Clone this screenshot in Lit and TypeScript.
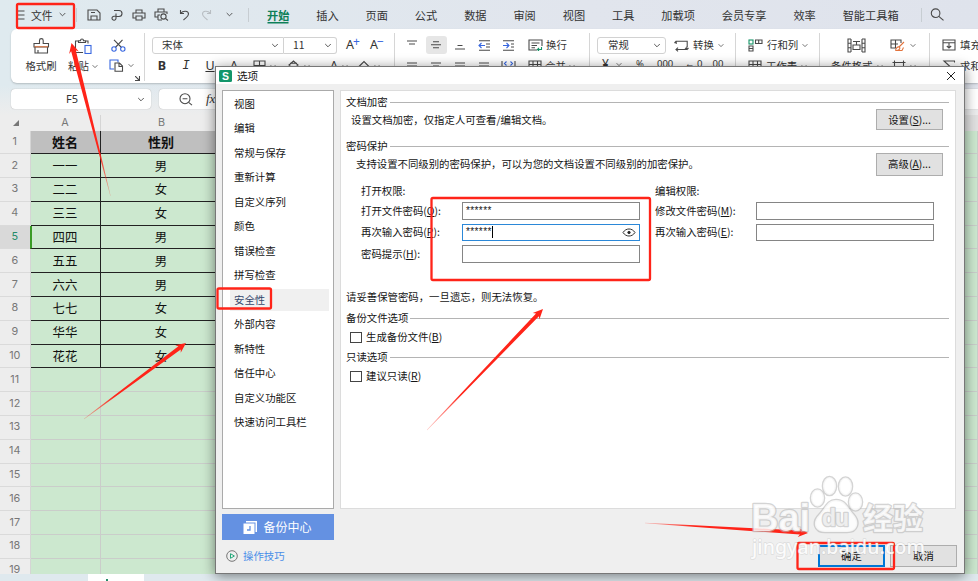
import { LitElement, html, svg, css } from "lit";
import { customElement } from "lit/decorators.js";
import { classMap } from "lit/directives/class-map.js";

const icon = (w: number, h: number, body: unknown, cls = "ic") =>
  html`<svg class=${cls} width=${w} height=${h} viewBox="0 0 ${w} ${h}">${body}</svg>`;
const chevron = (w = 7) =>
  html`<svg class="ic chev" width=${w} height="5" viewBox="0 0 7 5"><path d="M.7 1L3.5 3.8L6.3 1" /></svg>`;

const save = icon(14, 12, svg`<path d="M1 1H10L13 4V11H1ZM4 11V7H10V11M4 3.5H8" />`);
const share = icon(12, 12, svg`<path d="M3 1.5H8A3 3 0 0 1 8 7.5H5M5 4.5V9A2 2 0 1 1 3 7.2H5" />`);
const printer = icon(14, 12, svg`<path d="M4 4V1H10V4M4 9H1V4H13V9H10M4 7H10V11H4Z" />`);
const preview = icon(15, 13, svg`<path d="M4 4V1H10V4M4 9H1V4H13V6M4 12V7H6M4 12H8" /><circle cx="9.5" cy="8.5" r="2.6" /><path d="M11.5 10.5L14 12.5" />`);
const undo = icon(11, 12, svg`<path d="M1.5 1V4.5H5M1.8 4.2C4 1.5 9.5 1.5 9.5 5C9.5 7.5 7 8.5 4.5 11" />`);
const redo = icon(11, 12, svg`<path d="M9.5 1V4.5H6M9.2 4.2C7 1.5 1.5 1.5 1.5 5C1.5 7.5 4 8.5 6.5 11" />`, "ic pale");
const search = icon(15, 13, svg`<circle cx="5.6" cy="5.2" r="4.3" /><path d="M8.8 8.3L13.5 12.3" />`);
const brush = icon(17, 16, svg`<path d="M6.5 5.5V2.5A1.8 1.8 0 0 1 10.2 2.5V5.5H15.5V9H1V5.5ZM2 9V15H14.5V9M5 15V12" /><path class="orange" d="M1.5 8.8H15" />`);
const paste = icon(18, 16, svg`<path d="M5 3H1.5V14.5H9M11 3H14V5.5M4.5 4.5H11.5V2.8H9.5C9.5 .4 6.5 .4 6.5 2.8H4.5Z" /><rect class="blue" x="11" y="7.5" width="6" height="8" />`);
const cut = icon(15, 13, svg`<path d="M3 .8L10.5 8.5M11.5 .8L4.3 8.5" /><circle class="blue" cx="3" cy="10" r="2.2" /><circle class="blue" cx="11.8" cy="10" r="2.2" />`);
const copy = icon(15, 13, svg`<path class="blue" d="M5 10H1V1H9V3.5" /><path d="M6 4H10.5L13.5 7V12.3H6ZM10 4V7.5H13.5" />`);
const bars = (a: number, b: number, c: number, second = true) =>
  icon(12, 10, svg`<path d="M${a} ${b}H${12 - a}${second ? `M${c} ${b + 3}H${12 - c}` : ""}" />`);
const alignMid = icon(12, 10, svg`<path d="M3 1.7H9M1 4.7H11M3 7.7H9" />`);
const alignBot = icon(12, 10, svg`<path d="M3.5 5.5H8.5M1 9H11" />`);
const outdent = icon(13, 11, svg`<path d="M1 .7H12M8 4H12M8 7H12M1 10.2H12" /><path class="blue" d="M7 5.5H1M3.5 3L1 5.5L3.5 8" />`);
const indent = icon(13, 11, svg`<path d="M1 .7H12M9 4H12M9 7H12M1 10.2H12" /><path class="blue" d="M1 5.5H7M4.5 3L7 5.5L4.5 8" />`);
const wrap = icon(15, 12, svg`<path d="M9 11H1V1H14V7M3.5 4H11.5M3.5 6.5H9M3.5 8.7H7" /><path class="green" d="M13.5 8V10.5H9.5M11 9L9.5 10.5L11 12" />`);
const tableIc = icon(14, 12, svg`<path d="M1 1H13V11H1ZM1 4.5H13M5 1V11M9.5 1V11" />`);
const colsBlue = icon(15, 12, svg`<path d="M1 1V11M14 1V11" /><path class="blue" d="M5.5 1.5L3.5 3.5L5.5 5.5M9.5 1.5L11.5 3.5L9.5 5.5" />`);
const bucket = icon(13, 12, svg`<path d="M2 5L6.5 1L11 5L6.5 9.5ZM3 3.3H10M11.5 7V9" />`);
const eraser = icon(13, 12, svg`<path d="M1.5 7L7 1.5L11.5 6L7 10.5H4.5Z" />`);
const grid4 = icon(13, 12, svg`<path d="M1 1H12V11H1ZM1 5.5H12M6.5 1V11" />`);
const convert = icon(15, 13, svg`<path d="M2.2 5V2.2H13.2V8M12.8 7.5V10.5H2M.5 4L2.2 2.2M11 8.8L13 10.6L14.5 9M4 8.7L2 10.5L4 12.3" />`);
const rowsCols = icon(15, 13, svg`<rect class="green" x="1" y="1" width="4" height="4" /><path d="M1 7H5V12H1ZM1 9.5H5M7.5 1H14V4.5H7.5ZM10.7 1V4.5" />`);
const condFmt = icon(19, 15, svg`<path d="M4 1H1V14H4M1 5.3H4M1 9.7H4M15 1H18V14H15M15 5.3H18M15 9.7H18M4 1V14M15 1V14M6 3.5H13M9.5 3.5V7M6 7H13V11.5H6Z" />`);
const fmtBrush = icon(16, 13, svg`<path d="M6 9H1V1H11V4M1 5H8M5.5 1V9" /><path class="orange" d="M14 3L9 8M5.5 11.5C6 9 7.5 7.5 9.2 8C11 9 9 12 5.5 11.5M8 11.5H12L13.5 8.5" />`);
const cellIc = icon(14, 12, svg`<path d="M2.5 2.5H11.5V10H2.5ZM.5 2.5H13.5M2.5 .5V4M11.5 .5V4" />`);
const fill = icon(14, 12, svg`<path d="M1 1H13V11H1ZM1 3.7H13M7 4V9M4.8 7L7 9L9.2 7" />`);
const sigma = icon(14, 12, svg`<path d="M12.5 2.5V1H2L7.5 6L2 11H12.5V9.5" />`);
const zoomOut = icon(14, 13, svg`<circle cx="6" cy="5.7" r="5" /><path d="M3.6 5.7H8.4M9.6 9.3L13 12.2" />`);

const TABS = ["开始", "插入", "页面", "公式", "数据", "审阅", "视图", "工具", "加载项", "会员专享", "效率", "智能工具箱"];
const PEOPLE = [
  ["姓名", "性别"], ["一一", "男"], ["二二", "女"], ["三三", "女"], ["四四", "男"],
  ["五五", "男"], ["六六", "男"], ["七七", "女"], ["华华", "女"], ["花花", "女"],
];
const SECTIONS = ["视图", "编辑", "常规与保存", "重新计算", "自定义序列", "颜色", "错误检查", "拼写检查", "安全性",
  "外部内容", "新特性", "信任中心", "自定义功能区", "快速访问工具栏"];
const key = (label: string, k: string, tail = "") => html`<span>${label}(<u>${k}</u>)${tail}</span>`;

@customElement("sheet-view")
export class SheetView extends LitElement {
  static styles = css`
    :host { display: block; flex: 1; min-height: 0; overflow: hidden; background: #ededed; color: #777;
      font: 10.8px/12px Inter, "Noto Sans CJK SC", sans-serif; }
    .row { display: grid; grid-template-columns: 30.5px 70px 122px 1fr; height: 23.8px; }
    .row > * { display: flex; align-items: center; justify-content: center; box-sizing: border-box; }
    .head { height: 15.5px; }
    .head > :nth-child(2) { border-right: 1px solid #d5d5d5; }
    .head > :last-child { background: #e1e1e1; }
    .corner svg { margin-left: 2px; fill: #777; }
    .num { border-bottom: 1px solid #dadada; border-right: 1px solid #d5d5d5; }
    .num.on { background: #d9d9d9; color: #248b68; }
    .cell { background: #cce8cf; border-bottom: 1px solid #cacdca; border-right: 1px solid #cacdca; }
    .filled { color: #111; font: 12.4px/16px "Noto Sans CJK SC", sans-serif; border-color: #222; }
    .title .filled { background: #bfbfbf; font-size: 13px; font-weight: 700; }
    .active { border-left: 2px solid #399b25; padding-right: 1px; margin-left: -1px; }
  `;
  render() {
    return html`
      <div class="row head">
        <span class="corner"><svg width="6" height="6"><path d="M6 0V6H0Z" /></svg></span><span>A</span><span>B</span><span></span>
      </div>
      ${Array.from({ length: 19 }, (_, i) => {
        const p = PEOPLE[i];
        return html`<div class=${classMap({ row: true, title: i === 0 })}>
          <span class=${classMap({ num: true, on: i === 4 })}>${i + 1}</span>
          <span class=${classMap({ cell: true, filled: !!p, active: i === 4 })}>${p?.[0]}</span>
          <span class=${classMap({ cell: true, filled: !!p })}>${p?.[1]}</span>
          <span class="cell"></span>
        </div>`;
      })}`;
  }
}

@customElement("options-dialog")
export class OptionsDialog extends LitElement {
  static styles = css`
    :host { display: flex; flex-direction: column; box-sizing: border-box; width: 750px; height: 508px;
      background: #efefef; border: 1px solid #777; box-shadow: 0 2px 12px rgba(0, 0, 0, .48);
      color: #141414; font: 10.4px/14px "Noto Sans CJK SC", sans-serif; }
    * { box-sizing: border-box; }
    u { text-decoration-thickness: 1px; text-underline-offset: 1px; }
    .bar { height: 17px; background: #fff; display: flex; align-items: center; padding: 0 8px 0 3px; flex: none; }
    .logo { width: 13px; height: 12px; background: #13966a; color: #fff; border-radius: 1.5px; text-align: center;
      font: 700 10.5px/12px "Liberation Sans", sans-serif; }
    .name { flex: 1; padding-left: 5px; font-size: 10.6px; }
    .x { stroke: #222; fill: none; }
    .main { display: flex; gap: 6px; padding: 6px 8px 0 6px; height: 425px; flex: none; }
    .list { width: 112px; background: #fff; border: 1px solid #aaa; display: flex; flex-direction: column; padding-top: .5px; }
    .item { height: 24.5px; padding-left: 11px; display: flex; align-items: center; flex: none; }
    .item.on { background: linear-gradient(#f0f0f0, #f0f0f0) 7px center / 99px 22px no-repeat; color: #34466b; }
    .page { flex: 1; background: #fff; border: 1px solid #dcdcdc; padding: 4px 6px 0 5px; display: flex;
      flex-direction: column; }
    .legend { display: flex; align-items: center; gap: 2px; height: 14px; flex: none; }
    .legend::after { content: ""; flex: 1; height: 1px; background: #b4b4b4; }
    .line { display: flex; align-items: center; justify-content: space-between; padding: 0 6px 0 5px; height: 21px; flex: none; }
    .deep { padding-left: 10px; height: 22px; }
    .btn { background: #e1e1e1; border: 1px solid #adadad; width: 67px; height: 21px; display: flex;
      align-items: center; justify-content: center; }
    .tall { height: 23px; }
    .mt6 { margin-top: 6px; }
    .mt7 { margin-top: 7px; }
    .mt9 { margin-top: 9px; }
    .form { display: grid; grid-template-columns: 101px 178px 15px 101px 178px; grid-template-rows: 19px 21px 21.5px 21.5px;
      padding-left: 15px; margin-top: 6.5px; align-items: center; flex: none; }
    .pw { height: 17.5px; border: 1px solid #858585; display: flex; align-items: center; padding: 0 3px; }
    .stars { display: block; font: 10px/10px "Liberation Sans", sans-serif; letter-spacing: .4px; }
    .focus { border-color: #2b88d8; }
    .focus .stars { border-right: 1px solid #000; line-height: 12px; }
    .eye { margin-left: auto; fill: none; stroke: #333; }
    .c1 { grid-column: 1; } .c4 { grid-column: 4; }
    .notice { margin-top: 25.5px; height: 14px; flex: none; }
    .check { display: flex; align-items: center; gap: 4px; padding-left: 4px; height: 14px; margin-top: 5px; flex: none; }
    .check i { width: 12px; height: 11px; border: 1px solid #444; }
    .foot { display: flex; flex: 1; padding: 5px 7px 0 6px; justify-content: space-between; }
    .backup { width: 112px; height: 26px; background: #6491e2; color: #fff; font-size: 12px; display: flex;
      align-items: center; justify-content: center; gap: 6px; padding-right: 1px; }
    .tips { display: flex; align-items: center; gap: 5px; color: #4a8ee8; margin: 9px 0 0 4px; }
    .actions { display: flex; gap: 5px; padding-top: 31px; }
    .ok { border: 2px solid #0078d7; }
    .actions .btn { height: 22px; }
  `;
  render() {
    return html`
      <div class="bar"><span class="logo">S</span><span class="name">选项</span>
        <svg class="x" width="10" height="10"><path d="M1 1L9 9M9 1L1 9" /></svg></div>
      <div class="main">
        <div class="list">
          ${SECTIONS.map((s) => html`<div class=${classMap({ item: true, on: s === "安全性" })}>${s}</div>`)}
        </div>
        <div class="page">
          <div class="legend">文档加密</div>
          <div class="line"><span>设置文档加密，仅指定人可查看/编辑文档。</span><span class="btn">${key("设置", "S", "...")}</span></div>
          <div class="legend mt9">密码保护</div>
          <div class="line deep"><span>支持设置不同级别的密码保护，可以为您的文档设置不同级别的加密保护。</span><span class="btn tall">${key("高级", "A", "...")}</span></div>
          <div class="form">
            <span class="c1">打开权限:</span><span class="c4">编辑权限:</span>
            <span class="c1">${key("打开文件密码", "O", ":")}</span><span class="pw"><span class="stars">******</span></span>
            <span class="c4">${key("修改文件密码", "M", ":")}</span><span class="pw"></span>
            <span class="c1">${key("再次输入密码", "P", ":")}</span>
            <span class="pw focus"><span class="stars">******</span>
              <svg class="eye" width="14" height="9"><path d="M1 4.5C4 -.2 10 -.2 13 4.5C10 9.2 4 9.2 1 4.5Z" /><circle cx="7" cy="4.5" r="1.2" fill="#222" /></svg></span>
            <span class="c4">${key("再次输入密码", "E", ":")}</span><span class="pw"></span>
            <span class="c1">${key("密码提示", "H", ":")}</span><span class="pw"></span>
          </div>
          <div class="notice">请妥善保管密码，一旦遗忘，则无法恢复。</div>
          <div class="legend mt7">备份文件选项</div>
          <div class="check"><i></i>${key("生成备份文件", "B")}</div>
          <div class="legend mt6">只读选项</div>
          <div class="check"><i></i>${key("建议只读", "R")}</div>
        </div>
      </div>
      <div class="foot">
        <div>
          <div class="backup"><svg width="14" height="13"><path d="M3 0H14V11H12.5V1.5H3Z" fill="#fff" /><rect y="2.5" x=".5" width="11" height="10.5" fill="#fff" /><path d="M7 5V9H4" stroke="#6491e2" stroke-width="1.3" fill="none" /></svg>备份中心</div>
          <div class="tips"><svg width="12" height="12" fill="none"><circle cx="6" cy="6" r="5.3" stroke="#777" /><path d="M4.5 3.7L8.4 6L4.5 8.3Z" stroke="#25a87a" /></svg>操作技巧</div>
        </div>
        <div class="actions"><span class="btn ok">确定</span><span class="btn">取消</span></div>
      </div>`;
  }
}

interface Arrow { tail: [number, number]; tip: [number, number]; w: number; }
const ARROWS: Arrow[] = [
  { tail: [110.5, 196], tip: [71.5, 43], w: 2.4 },
  { tail: [84, 419], tip: [186, 343], w: 2 },
  { tail: [427, 430], tip: [543, 309], w: 2 },
  { tail: [645, 523], tip: [808, 533], w: 2 },
];
const BOXES = [[17, 4, 57, 24], [217.5, 288.5, 53.5, 20], [431.5, 198, 218.5, 82], [797.5, 543, 96.5, 26]];

@customElement("app-root")
export class AppRoot extends LitElement {
  static styles = css`
    :host { display: flex; flex-direction: column; position: relative; width: 978px; height: 581px; overflow: hidden;
      background: linear-gradient(#0000 85px, #ededed 115px), linear-gradient(90deg, #dfeaef, #e1e5ed 60%, #dfe3ec);
      color: #333; font: 10.4px/14px "Noto Sans CJK SC", sans-serif; }
    * { box-sizing: border-box; }
    .ic { fill: none; stroke: #4a4a4a; stroke-width: 1.1; flex: none; display: block; }
    .chev { stroke-width: .9; }
    .pale { stroke: #b8bdc2; }
    .blue { stroke: #3867e0; } .green { stroke: #149467; } .orange { stroke: #e2733c; }
    .menu { display: flex; align-items: center; height: 29px; padding-left: 18px; flex: none; }
    .file { display: flex; align-items: center; gap: 6px; width: 58px; font-size: 10.8px; }
    .sep { width: 1px; height: 14px; background: #c7cdd2; flex: none; }
    .quick { display: grid; grid-template-columns: repeat(7, 22.5px); justify-items: center; align-items: center;
      padding-left: 6px; width: 171px; }
    .tabs { display: flex; gap: 26.9px; margin-left: 18px; font-size: 11.2px; width: 654px; white-space: nowrap; }
    .tabs .on { color: #0d7f58; font-weight: 700; box-shadow: 0 2px 0 -.5px #0d7f58; }
    .find { padding-left: 8px; }
    .ribbon { display: flex; margin-left: 11px; height: 54px; background: #fff; border-radius: 6px 0 0 6px; flex: none;
      box-shadow: 0 1px 2px rgba(0, 0, 0, .2); padding-top: 4px; overflow: hidden; }
    .group { display: flex; flex-direction: column; height: 48px; border-right: 1px solid #d6d6d6; flex: none; }
    .line { display: flex; align-items: center; height: 24px; flex: none; white-space: nowrap; }
    .line + .line { height: 18px; }
    .clip { width: 134px; flex-direction: row; padding-left: 9px; position: relative; }
    .big { display: flex; flex-direction: column; align-items: center; width: 42px; padding-top: 5px; gap: 5px; }
    .big > span { display: flex; align-items: center; gap: 3px; }
    .small { display: flex; flex-direction: column; padding: 6px 0 0 7px; gap: 7px; }
    .small > span { display: flex; align-items: center; gap: 4px; }
    .small > span + span { margin-left: -2px; }
    .launch { position: absolute; right: 4px; bottom: 0; }
    .font { width: 250px; padding-left: 7px; }
    .box { display: flex; align-items: center; justify-content: space-between; height: 17px; border: 1px solid #d2d2d2;
      padding: 0 4px 0 9px; border-radius: 3px; }
    .family { width: 132px; border-radius: 3px 0 0 3px; }
    .size { width: 53px; border-left: 0; border-radius: 0 3px 3px 0; }
    .grow { width: 24px; display: flex; justify-content: center; font: 12.5px/14px "Noto Sans", sans-serif; margin-left: 4px; }
    .grow + .grow { margin-left: 0; }
    .grow sup { color: #3867e0; font: 12px/8px "Noto Sans", sans-serif; margin-left: -1px; }
    .fmt { display: grid; grid-template-columns: 24px 24px 24px 31px 34px 34px 36px 34px; align-items: center; margin-left: -2px; }
    .fmt > * { display: flex; align-items: center; gap: 4px; }
    .fmt .ch { justify-content: center; font: 12.5px/14px "Noto Sans", sans-serif; }
    .fmt b { font-weight: 700; }
    .fmt i { font-family: "Liberation Mono", monospace; }
    .fmt .strike { padding-right: 7px; }
    .align { width: 195px; padding-left: 5px; }
    .slot { width: 24px; display: flex; justify-content: center; flex: none; }
    .hl { width: 21px; height: 18px; margin: 0 1.5px; align-items: center; background: #e6e6e6; border-radius: 3px; }
    .lab { display: flex; align-items: center; gap: 4px; }
    .align .lab { margin-left: 8px; gap: 3px; }
    .num { width: 146px; padding-left: 7px; }
    .kind { width: 69px; padding-left: 10px; }
    .num .lab { margin-left: 8px; }
    .figs { display: grid; grid-template-columns: 34px 21px 28px 25px 25px; font: 9.5px/12px "Noto Sans", sans-serif;
      padding: 0 0 4px 5px; }
    .figs span { display: flex; gap: 7px; align-items: center; }
    .figs .yen { font-size: 12px; }
    .cells { width: 84px; padding-left: 12px; }
    .cells .line { gap: 4px; }
    .style { width: 110px; padding-left: 11px; }
    .style .line { justify-content: space-between; padding-right: 13px; }
    .style .line:first-child { padding-left: 16px; }
    .last { border: 0; padding-left: 12px; }
    .last .line { gap: 4px; }
    .formula { display: flex; height: 32px; padding: 6px 0 0 11px; gap: 8px; flex: none; }
    .ref { width: 140px; height: 20px; background: #fff; border-radius: 4px; display: flex; align-items: center;
      padding: 0 6px 0 55px; justify-content: space-between; font: 11px/14px "Noto Sans", sans-serif; box-shadow: 0 0 1px #999; }
    .entry { flex: 1; height: 20px; background: #fff; border-radius: 4px 0 0 4px; display: flex; align-items: center; gap: 13px;
      padding-left: 20px; box-shadow: 0 0 1px #999; font: italic 13px/14px "Liberation Serif", serif; }
    .sheets { height: 7px; display: flex; background: #dfe9ee; flex: none; }
    .sheets .tab { width: 56px; margin-left: 88px; background: #fff; display: flex; justify-content: center; align-items: flex-end; }
    .sheets .tab::after { content: ""; width: 2px; height: 2px; background: #248b68; margin-right: 19px; }
    .dialog { position: absolute; left: 215px; top: 66px; }
    .marks { position: absolute; inset: 0; }
    .wm { fill: #fff; fill-opacity: .8; stroke: #b8b8b8; stroke-width: 2.6; paint-order: stroke; stroke-opacity: .6;
      stroke-linejoin: round; font-family: "Liberation Sans", "Noto Sans CJK SC", sans-serif; font-weight: 700; }
    .thin { font-family: "Noto Sans", sans-serif; font-weight: 500; stroke-width: 1.4; stroke-opacity: .35; fill-opacity: .9; }
    .cjk { font-family: "Noto Sans CJK SC", sans-serif; }
    .inner { fill: #eee; fill-opacity: 1; }
    .frame { fill: none; stroke: #ff2419; stroke-width: 2.3; }
  `;

  private arrow(a: Arrow, i: number) {
    const dx = a.tip[0] - a.tail[0], dy = a.tip[1] - a.tail[1];
    const len = Math.hypot(dx, dy), ux = dx / len, uy = dy / len;
    const at = (back: number, side: number) =>
      `${(a.tip[0] - ux * back - uy * side).toFixed(2)},${(a.tip[1] - uy * back + ux * side).toFixed(2)}`;
    const pts = [at(len, 0.2), at(8, a.w), at(10, a.w + 2.6), at(0, 0), at(10, -a.w - 2.6), at(8, -a.w), at(len, -0.2)];
    return svg`<linearGradient id="fade${i}" gradientUnits="userSpaceOnUse" x1=${a.tail[0]} y1=${a.tail[1]} x2=${a.tip[0]} y2=${a.tip[1]}>
        <stop offset="0" stop-color="#ff2419" stop-opacity=".25" /><stop offset=".3" stop-color="#ff2419" />
      </linearGradient><polygon points=${pts.join(" ")} fill="url(#fade${i})" />`;
  }

  render() {
    return html`
      <div class="menu">
        <div class="file">${icon(7, 10, svg`<path d="M0 1H6.5M0 5H6.5M0 9H6.5" />`)}<span>文件</span>${chevron()}</div>
        <i class="sep"></i>
        <div class="quick">${save}${share}${printer}${preview}${undo}${redo}${chevron(9)}</div>
        <i class="sep"></i>
        <div class="tabs">${TABS.map((t, i) => html`<span class=${classMap({ on: i === 0 })}>${t}</span>`)}</div>
        <i class="sep"></i><div class="find">${search}</div>
      </div>
      <div class="ribbon">
        <div class="group clip">
          <div class="big">${brush}<span>格式刷</span></div>
          <div class="big">${paste}<span>粘贴${chevron(6)}</span></div>
          <div class="small"><span>${cut}</span><span>${copy}${chevron(6)}</span></div>
          <svg class="ic launch" width="5" height="5"><path d="M0 0L4 4M4.5 0V4.5H0" /></svg>
        </div>
        <div class="group font">
          <div class="line"><span class="box family">宋体${chevron(8)}</span><span class="box size">11${chevron(8)}</span>
            <span class="grow">A<sup>+</sup></span><span class="grow">A<sup>−</sup></span></div>
          <div class="line fmt"><span class="ch"><b>B</b></span><span class="ch"><i>I</i></span><span class="ch"><u>U</u></span>
            <span class="ch strike">A</span><span>${grid4}${chevron(6)}</span><span>${bucket}${chevron(6)}</span>
            <span class="ch">A ${chevron(6)}</span><span>${eraser}${chevron(6)}</span></div>
        </div>
        <div class="group align">
          <div class="line"><span class="slot">${bars(1, 1, 3)}</span><span class="slot hl">${alignMid}</span><span class="slot">${alignBot}</span>
            <span class="slot">${outdent}</span><span class="slot">${indent}</span><span class="lab">${wrap}换行</span></div>
          <div class="line"><span class="slot">${bars(1, 2, 1)}</span><span class="slot">${bars(1, 2, 3)}</span><span class="slot">${bars(1, 2, 1)}</span>
            <span class="slot">${bars(1, 2, 1)}</span><span class="slot">${colsBlue}</span><span class="lab">${tableIc}合并${chevron(6)}</span></div>
        </div>
        <div class="group num">
          <div class="line"><span class="box kind">常规${chevron(8)}</span><span class="lab">${convert}转换${chevron(6)}</span></div>
          <div class="line figs"><span class="yen">¥${chevron(6)}</span><span>%</span><span>000</span><span>←.0</span><span>.00</span></div>
        </div>
        <div class="group cells">
          <div class="line">${rowsCols}<span>行和列</span>${chevron(6)}</div>
          <div class="line">${tableIc}<span>工作表</span>${chevron(6)}</div>
        </div>
        <div class="group style">
          <div class="line">${condFmt}<span class="lab">${fmtBrush}${chevron(6)}</span></div>
          <div class="line"><span class="lab">条件格式${chevron(6)}</span><span class="lab">${cellIc}${chevron(6)}</span></div>
        </div>
        <div class="group last">
          <div class="line">${fill}<span>填充</span></div>
          <div class="line">${sigma}<span>求和</span></div>
        </div>
      </div>
      <div class="formula"><span class="ref">F5${chevron(8)}</span><span class="entry">${zoomOut}fx</span></div>
      <sheet-view></sheet-view>
      <div class="sheets"><span class="tab"></span></div>
      <options-dialog class="dialog"></options-dialog>
      <svg class="marks" width="978" height="581">
        ${ARROWS.map((a, i) => this.arrow(a, i))}
        ${BOXES.map((b) => svg`<rect class="frame" x=${b[0]} y=${b[1]} width=${b[2]} height=${b[3]} rx="1.5" />`)}
        <g class="wm">
          <text x="751" y="531" font-size="38" textLength="59">Bai</text>
          <ellipse cx="817.5" cy="498" rx="6.5" ry="8.5" /><ellipse cx="829.5" cy="486" rx="6.5" ry="9" />
          <ellipse cx="845.5" cy="486.5" rx="6.5" ry="9" /><ellipse cx="855.5" cy="502" rx="6.5" ry="8.5" />
          <path d="M836 500C846 500 848 509 854 515C860 522 858 532 847 532H825C814 532 812 522 819 515C825 509 827 500 836 500Z" />
          <text class="inner" x="822" y="526" font-size="23" textLength="27">du</text>
          <text class="cjk" x="863" y="529" font-size="30" textLength="60">经验</text>
          <text class="thin" x="752" y="554" font-size="19.5" textLength="173">jingyan.baidu.com</text>
        </g>
      </svg>`;
  }
}
